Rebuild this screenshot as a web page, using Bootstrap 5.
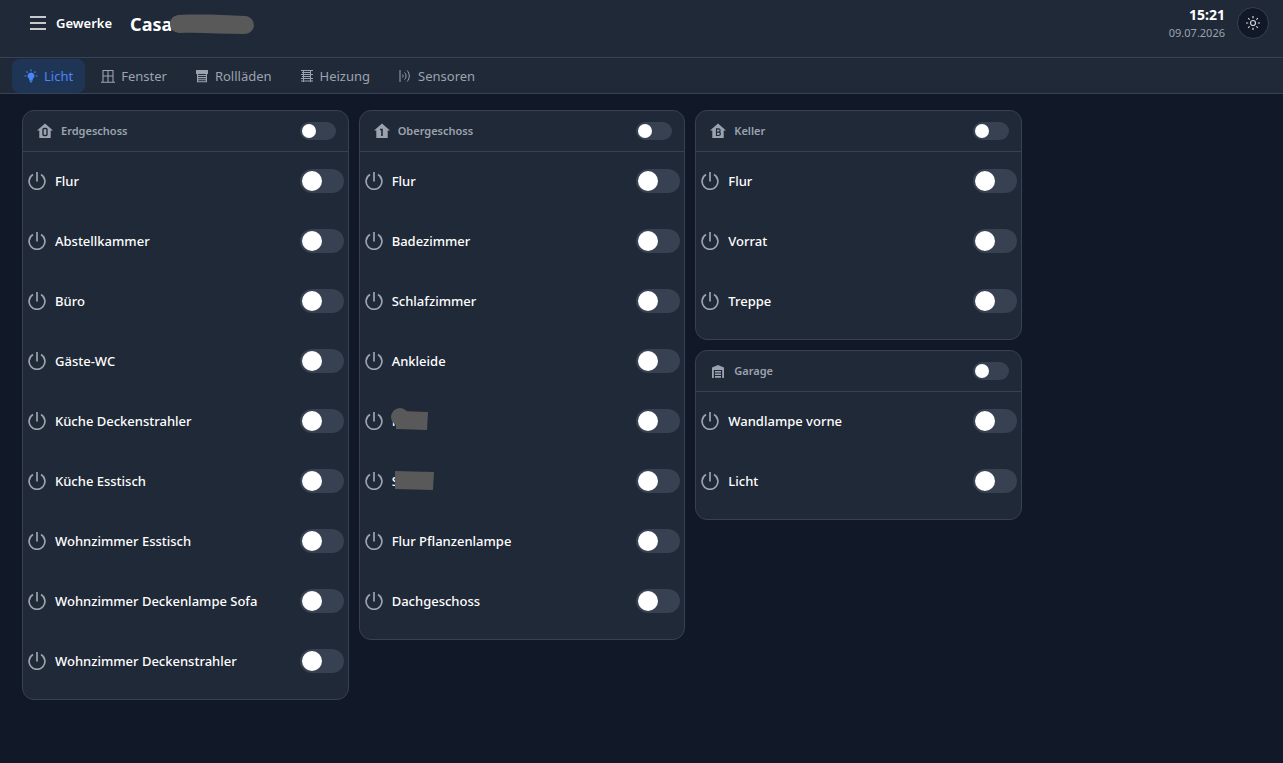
<!DOCTYPE html>
<html lang="de" data-bs-theme="dark">
<head>
<meta charset="utf-8">
<meta name="viewport" content="width=device-width, initial-scale=1">
<title>Casa – Licht</title>
<link href="https://cdn.jsdelivr.net/npm/bootstrap@5.3.0/dist/css/bootstrap.min.css" rel="stylesheet">
<style>
  :root { --page: #111827; --panel: #1f2937; --line: #374151; --muted: #9ca3af; }
  body { background: var(--page); color: #fff; font-family: "Noto Sans", "Open Sans", sans-serif; font-size: 13px; line-height: 20px; }
  svg { display: block; flex: none; }
  .topbar { background: var(--panel); border-bottom: 1px solid var(--line); height: 58px; padding: 7px 14px 0 30px; }
  .menu-btn { color: #fff; font-size: 13px; font-weight: 600; line-height: 20px; gap: 10px; height: 32px; }
  .brand-name { font-size: 18px; line-height: 34px; font-weight: 700; margin-left: 18px; }
  .redacted { position: absolute; fill: #595959; }
  .redact-brand { left: 40px; top: 7px; }
  .redact-room { left: -1px; top: -4px; }
  .clock { font-size: 14px; line-height: 16px; font-weight: 700; }
  .date { font-size: 11px; line-height: 20px; color: var(--muted); }
  .theme-btn { width: 32px; height: 32px; background: var(--page); border: 1px solid var(--line); color: #d1d5db; border-radius: 50%; }
  .trades { background: var(--panel); border-bottom: 1px solid var(--line); height: 36px; padding: 0 12px; gap: 4px; flex-wrap: nowrap; overflow: hidden; }
  .trades .nav-link { display: flex; align-items: center; gap: 6px; height: 34px; padding: 0 12px; border-radius: 8px; color: var(--muted); font-size: 13px; }
  .trades .nav-link.active { background: #1f3556; color: #4a86f5; }
  .floors { max-width: 1044px; padding: 16px 22px; }
  .floors > .row { --bs-gutter-x: 10px; --bs-gutter-y: 10px; }
  .stack { row-gap: 10px; }
  .panel { background: var(--panel); border: 1px solid var(--line); border-radius: 12px; padding-bottom: 7px; }
  .panel-head { border-bottom: 1px solid var(--line); height: 41px; padding: 0 12px 0 14px; color: var(--muted); }
  .panel-head label { font-size: 11px; font-weight: 600; line-height: 22px; }
  .lamp { height: 60px; padding: 0 4px 2px 5px; gap: 9px; font-weight: 500; }
  .lamp svg.power { color: var(--muted); }
  .toggle { appearance: none; display: flex; flex: none; margin: 0; padding: 2px; width: 44px; height: 24px; border-radius: 12px; background: var(--line); cursor: pointer; }
  .toggle::before { content: ""; width: 20px; height: 20px; border-radius: 50%; background: #fff; }
  .toggle:checked { background: #3b82f6; justify-content: flex-end; }
  .toggle-sm { width: 36px; height: 18px; }
  .toggle-sm::before { width: 14px; height: 14px; }
</style>
</head>
<body>
<svg width="0" height="0" class="d-none" aria-hidden="true">
  <symbol id="power" viewBox="0 0 18 18"><path d="M5 2.600a7.900 7.900 0 1 0 8 0M9 0v9.500" fill="none" stroke="currentColor" stroke-width="1.700"/></symbol>
  <symbol id="house" viewBox="0 0 16 16"><path d="M8 .500 0 7.500h2.300V15h11.400V7.500H16z" fill="currentColor"/></symbol>
</svg>

<header class="topbar d-flex align-items-start">
  <button type="button" class="btn menu-btn d-flex align-items-center p-0 border-0">
    <svg width="16" height="16" viewBox="0 0 16 16" stroke="currentColor" stroke-width="1.6"><path d="M0 2h16M0 8h16M0 14h16"/></svg>
    Gewerke
  </button>
  <div class="brand-name position-relative">Casa
    <svg class="redacted redact-brand" width="84" height="22" viewBox="0 0 84 22"><path d="M8 1C30 0 55 1 75 2c12 1 12 18-1 18C50 20 30 18 9 19-3 18-3 3 8 1z"/></svg>
  </div>
  <div class="ms-auto text-end me-2 pe-1">
    <div class="clock">15:21</div>
    <div class="date">09.07.2026</div>
  </div>
  <button type="button" class="btn theme-btn d-flex align-items-center justify-content-center p-0" aria-label="Helles Design">
    <svg width="14" height="14" viewBox="0 0 14 14" fill="none" stroke="currentColor" stroke-width="1.2"><circle cx="7" cy="7" r="2.500"/><path d="M7 0v2.200M7 11.800V14M0 7h2.200M11.800 7H14M2.200 2.200l1.400 1.400M10.400 10.400l1.400 1.400M2.200 11.800l1.400-1.400M10.400 3.600l1.400-1.400"/></svg>
  </button>
</header>

<nav class="nav trades align-items-center" aria-label="Gewerke">
  <a class="nav-link active" href="#licht"><svg width="14" height="14" viewBox="0 0 24 24" fill="currentColor"><path d="M12 6a6 6 0 0 1 3 11.200V19a1 1 0 0 1-1 1h-4a1 1 0 0 1-1-1v-1.800A6 6 0 0 1 12 6M14 21v1a1 1 0 0 1-1 1h-2a1 1 0 0 1-1-1v-1h4M20 11h3v2h-3v-2M1 11h3v2H1v-2M13 1v3h-2V1h2M4.920 3.500l2.130 2.140-1.420 1.410L3.500 4.930 4.920 3.500M16.950 5.630l2.120-2.130 1.430 1.430-2.130 2.120-1.420-1.420z"/></svg>Licht</a>
  <a class="nav-link" href="#fenster"><svg width="14" height="14" viewBox="0 0 14 14" fill="none" stroke="currentColor" stroke-width="1.100"><path d="M2 13V1.500h10V13M7 1.500V13M2 7h10M0 13.200h14"/></svg>Fenster</a>
  <a class="nav-link" href="#rolllaeden"><svg width="14" height="14" viewBox="0 0 14 14" fill="currentColor"><path d="M1 1h12v4H1zM2 5h1.200v8H2zM10.800 5H12v8h-1.200zM3 6h8v1H3zM3 8h8v1.200H3zM3 10.200h8v1H3zM2 12.200h10v1H2z"/></svg>Rollläden</a>
  <a class="nav-link" href="#heizung"><svg width="14" height="14" viewBox="0 0 14 14" fill="none" stroke="currentColor"><path d="M1 1.500h12M2 3.500h9M1 5.500h12M2 7.500h9M1 9.500h12M1 12h12M3.500 1v12M10.500 1v12"/></svg>Heizung</a>
  <a class="nav-link" href="#sensoren"><svg width="14" height="14" viewBox="0 0 14 14" fill="none" stroke="currentColor" stroke-width="1"><path d="M2 1v12M4.500 5.500c.8 1 .8 2 0 3M6.500 3.500c2 2 2 5 0 7M9 1.500c3 3 3 8 0 11"/></svg>Sensoren</a>
</nav>

<main class="floors">
  <div class="row align-items-start">
    <div class="col-12 col-md-4">
      <section class="panel">
        <div class="panel-head d-flex align-items-center gap-2">
          <svg width="16" height="16" viewBox="0 0 16 16"><use href="#house"/><rect x="6" y="5.500" width="4" height="7" rx="1" fill="none" stroke="#1f2937" stroke-width="1.400"/></svg>
          <label for="eg">Erdgeschoss</label><input class="toggle toggle-sm ms-auto" type="checkbox" role="switch" id="eg">
        </div>
        <div class="lamp d-flex align-items-center"><svg class="power" width="18" height="18"><use href="#power"/></svg><label for="e1">Flur</label><input class="toggle ms-auto" type="checkbox" role="switch" id="e1"></div>
        <div class="lamp d-flex align-items-center"><svg class="power" width="18" height="18"><use href="#power"/></svg><label for="e2">Abstellkammer</label><input class="toggle ms-auto" type="checkbox" role="switch" id="e2"></div>
        <div class="lamp d-flex align-items-center"><svg class="power" width="18" height="18"><use href="#power"/></svg><label for="e3">Büro</label><input class="toggle ms-auto" type="checkbox" role="switch" id="e3"></div>
        <div class="lamp d-flex align-items-center"><svg class="power" width="18" height="18"><use href="#power"/></svg><label for="e4">Gäste-WC</label><input class="toggle ms-auto" type="checkbox" role="switch" id="e4"></div>
        <div class="lamp d-flex align-items-center"><svg class="power" width="18" height="18"><use href="#power"/></svg><label for="e5">Küche Deckenstrahler</label><input class="toggle ms-auto" type="checkbox" role="switch" id="e5"></div>
        <div class="lamp d-flex align-items-center"><svg class="power" width="18" height="18"><use href="#power"/></svg><label for="e6">Küche Esstisch</label><input class="toggle ms-auto" type="checkbox" role="switch" id="e6"></div>
        <div class="lamp d-flex align-items-center"><svg class="power" width="18" height="18"><use href="#power"/></svg><label for="e7">Wohnzimmer Esstisch</label><input class="toggle ms-auto" type="checkbox" role="switch" id="e7"></div>
        <div class="lamp d-flex align-items-center"><svg class="power" width="18" height="18"><use href="#power"/></svg><label for="e8">Wohnzimmer Deckenlampe Sofa</label><input class="toggle ms-auto" type="checkbox" role="switch" id="e8"></div>
        <div class="lamp d-flex align-items-center"><svg class="power" width="18" height="18"><use href="#power"/></svg><label for="e9">Wohnzimmer Deckenstrahler</label><input class="toggle ms-auto" type="checkbox" role="switch" id="e9"></div>
      </section>
    </div>

    <div class="col-12 col-md-4">
      <section class="panel">
        <div class="panel-head d-flex align-items-center gap-2">
          <svg width="16" height="16" viewBox="0 0 16 16"><use href="#house"/><path d="M6 6.500h2V13" fill="none" stroke="#1f2937" stroke-width="1.600"/></svg>
          <label for="og">Obergeschoss</label><input class="toggle toggle-sm ms-auto" type="checkbox" role="switch" id="og">
        </div>
        <div class="lamp d-flex align-items-center"><svg class="power" width="18" height="18"><use href="#power"/></svg><label for="o1">Flur</label><input class="toggle ms-auto" type="checkbox" role="switch" id="o1"></div>
        <div class="lamp d-flex align-items-center"><svg class="power" width="18" height="18"><use href="#power"/></svg><label for="o2">Badezimmer</label><input class="toggle ms-auto" type="checkbox" role="switch" id="o2"></div>
        <div class="lamp d-flex align-items-center"><svg class="power" width="18" height="18"><use href="#power"/></svg><label for="o3">Schlafzimmer</label><input class="toggle ms-auto" type="checkbox" role="switch" id="o3"></div>
        <div class="lamp d-flex align-items-center"><svg class="power" width="18" height="18"><use href="#power"/></svg><label for="o4">Ankleide</label><input class="toggle ms-auto" type="checkbox" role="switch" id="o4"></div>
        <div class="lamp d-flex align-items-center"><svg class="power" width="18" height="18"><use href="#power"/></svg><label for="o5" class="position-relative">F<svg class="redacted redact-room" width="44" height="24" viewBox="0 0 44 24"><circle cx="9" cy="10" r="9"/><path d="M9 4l28 1-1 18-31-1V10z"/></svg></label><input class="toggle ms-auto" type="checkbox" role="switch" id="o5"></div>
        <div class="lamp d-flex align-items-center"><svg class="power" width="18" height="18"><use href="#power"/></svg><label for="o6" class="position-relative">S<svg class="redacted redact-room" width="44" height="24" viewBox="0 0 44 24"><path d="M4 4l39 1-1 18-38-1z"/></svg></label><input class="toggle ms-auto" type="checkbox" role="switch" id="o6"></div>
        <div class="lamp d-flex align-items-center"><svg class="power" width="18" height="18"><use href="#power"/></svg><label for="o7">Flur Pflanzenlampe</label><input class="toggle ms-auto" type="checkbox" role="switch" id="o7"></div>
        <div class="lamp d-flex align-items-center"><svg class="power" width="18" height="18"><use href="#power"/></svg><label for="o8">Dachgeschoss</label><input class="toggle ms-auto" type="checkbox" role="switch" id="o8"></div>
      </section>
    </div>

    <div class="col-12 col-md-4 d-grid stack">
      <section class="panel">
        <div class="panel-head d-flex align-items-center gap-2">
          <svg width="16" height="16" viewBox="0 0 16 16"><use href="#house"/><path d="M6.500 5.800H8.500a1.600 1.600 0 0 1 0 3.300h-2 2.200a1.700 1.700 0 0 1 0 3.400H6.500z" fill="none" stroke="#1f2937" stroke-width="1.200"/></svg>
          <label for="kg">Keller</label><input class="toggle toggle-sm ms-auto" type="checkbox" role="switch" id="kg">
        </div>
        <div class="lamp d-flex align-items-center"><svg class="power" width="18" height="18"><use href="#power"/></svg><label for="k1">Flur</label><input class="toggle ms-auto" type="checkbox" role="switch" id="k1"></div>
        <div class="lamp d-flex align-items-center"><svg class="power" width="18" height="18"><use href="#power"/></svg><label for="k2">Vorrat</label><input class="toggle ms-auto" type="checkbox" role="switch" id="k2"></div>
        <div class="lamp d-flex align-items-center"><svg class="power" width="18" height="18"><use href="#power"/></svg><label for="k3">Treppe</label><input class="toggle ms-auto" type="checkbox" role="switch" id="k3"></div>
      </section>
      <section class="panel">
        <div class="panel-head d-flex align-items-center gap-2">
          <svg width="16" height="16" viewBox="0 0 16 16"><path d="M2 4.500 8 2l6 2.500V15h-1.800V7H3.800v8H2zM5 8h6v1.500H5zM5 10.500h6V12H5zM5 13h6v1.800H5z" fill="currentColor"/></svg>
          <label for="ga">Garage</label><input class="toggle toggle-sm ms-auto" type="checkbox" role="switch" id="ga">
        </div>
        <div class="lamp d-flex align-items-center"><svg class="power" width="18" height="18"><use href="#power"/></svg><label for="g1">Wandlampe vorne</label><input class="toggle ms-auto" type="checkbox" role="switch" id="g1"></div>
        <div class="lamp d-flex align-items-center"><svg class="power" width="18" height="18"><use href="#power"/></svg><label for="g2">Licht</label><input class="toggle ms-auto" type="checkbox" role="switch" id="g2"></div>
      </section>
    </div>
  </div>
</main>
<script src="https://cdn.jsdelivr.net/npm/bootstrap@5.3.0/dist/js/bootstrap.bundle.min.js"></script>
</body>
</html>
